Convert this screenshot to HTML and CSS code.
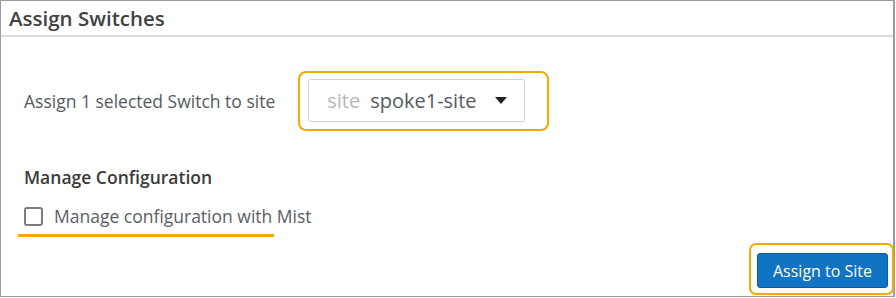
FILE: index.html
```html
<!DOCTYPE html>
<html lang="en">
<head>
    <meta charset="UTF-8">
    <title>Assign Switches</title>
    <link rel="stylesheet" href="styles.css">
</head>
<body>
    <div class="modal">
        <div class="modal-header">Assign Switches</div>
        <div class="modal-body">
            <div class="site-row">
                <span class="site-label">Assign 1 selected Switch to site</span>
                <div class="highlight site-highlight">
                    <div class="site-select">
                        <span class="select-prefix">site</span>
                        <span class="select-value">spoke1-site</span>
                        <span class="caret"></span>
                    </div>
                </div>
            </div>
            <div class="section-title">Manage Configuration</div>
            <label class="check-row">
                <span class="checkbox"></span>
                <span class="check-text">Manage configuration with Mist</span>
            </label>
            <div class="underline"></div>
        </div>
        <div class="modal-footer">
            <div class="highlight button-highlight">
                <button class="btn-primary">Assign to Site</button>
            </div>
        </div>
    </div>
</body>
</html>
```

FILE: styles.css
```css
body {
    margin: 0;
    font-family: "Open Sans", "Noto Sans", sans-serif;
    background: #ffffff;
}

.modal {
    width: 895px;
    height: 297px;
    box-sizing: border-box;
    border: 1px solid #9c9c9c;
    border-right-width: 2px;
    display: flex;
    flex-direction: column;
}

.modal-header {
    height: 36px;
    box-sizing: border-box;
    padding: 3px 0 0 8px;
    font-size: 20.5px;
    line-height: 28px;
    font-weight: 600;
    color: #414141;
    border-bottom: 2px solid #dcdcdc;
}

.modal-body {
    padding: 34px 0 0 23px;
    flex: 1;
}

.site-row {
    display: flex;
    align-items: center;
    gap: 23px;
}

.site-label {
    font-size: 17.5px;
    line-height: 24px;
    color: #555a60;
}

.highlight {
    border: 2px solid #f5a800;
    border-radius: 8px;
}

.site-highlight {
    width: 251px;
    height: 60px;
    box-sizing: border-box;
    padding: 6px 0 0 8px;
}

.site-select {
    width: 217px;
    height: 43px;
    box-sizing: border-box;
    border: 1px solid #d0d0d0;
    border-radius: 3px;
    display: flex;
    align-items: center;
    padding: 0 0 0 18px;
}

.select-prefix {
    font-size: 20px;
    color: #b8b8b8;
    margin-right: 10px;
}

.select-value {
    font-size: 20px;
    color: #555a60;
}

.caret {
    margin-left: 18px;
    width: 0;
    height: 0;
    border-left: 6px solid transparent;
    border-right: 6px solid transparent;
    border-top: 7px solid #222;
}

.section-title {
    margin-top: 34px;
    font-size: 17.5px;
    line-height: 24px;
    font-weight: 600;
    color: #3b3b3b;
}

.check-row {
    margin-top: 15px;
    display: flex;
    align-items: center;
    gap: 11px;
}

.checkbox {
    width: 19px;
    height: 19px;
    box-sizing: border-box;
    border: 2px solid #7c7c86;
    border-radius: 3px;
}

.check-text {
    font-size: 17.5px;
    line-height: 24px;
    color: #5a5e66;
}

.underline {
    margin: 6px 0 0 -6px;
    width: 256px;
    height: 3px;
    background: #f5a800;
}

.modal-footer {
    display: flex;
    justify-content: flex-end;
    padding-bottom: 1px;
}

.button-highlight {
    width: 145px;
    height: 52px;
    box-sizing: border-box;
    border-radius: 7px;
    padding: 8px 0 0 6px;
    margin-right: -1px;
}

.btn-primary {
    width: 131px;
    height: 35px;
    border: 1px solid #0b5c9e;
    border-radius: 3px;
    background: #1173c3;
    color: #ffffff;
    font-family: "Open Sans", "Noto Sans", sans-serif;
    font-size: 16px;
    padding: 0;
}
```
